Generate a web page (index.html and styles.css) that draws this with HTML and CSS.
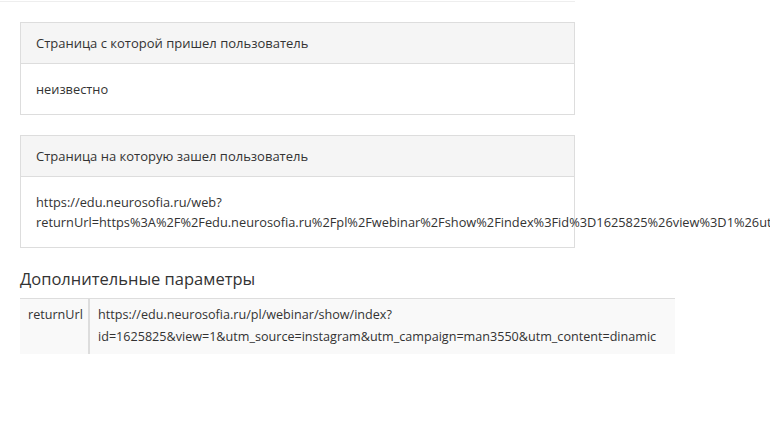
FILE: index.html
```html
<!DOCTYPE html>
<html lang="ru">
<head>
<meta charset="utf-8">
<link rel="stylesheet" href="styles.css">
</head>
<body>
<div class="topline"></div>
<main class="content">
  <section class="panel">
    <div class="panel-heading">Страница с которой пришел пользователь</div>
    <div class="panel-body">неизвестно</div>
  </section>
  <section class="panel">
    <div class="panel-heading">Страница на которую зашел пользователь</div>
    <div class="panel-body">https://edu.neurosofia.ru/web?<br>returnUrl=https%3A%2F%2Fedu.neurosofia.ru%2Fpl%2Fwebinar%2Fshow%2Findex%3Fid%3D1625825%26view%3D1%26utm_source%3Dinstagram%26utm_campaign%3Dman3550%26utm_content%3Ddinamic</div>
  </section>
  <h3 class="section-title">Дополнительные параметры</h3>
  <table class="params">
    <tr>
      <td class="param-name">returnUrl</td>
      <td class="param-value">https://edu.neurosofia.ru/pl/webinar/show/index?<br>id=1625825&amp;view=1&amp;utm_source=instagram&amp;utm_campaign=man3550&amp;utm_content=dinamic</td>
    </tr>
  </table>
</main>
</body>
</html>
```
FILE: styles.css
```css
html, body {
  margin: 0;
  padding: 0;
  background: #fff;
  overflow: hidden;
}
body {
  font-family: "Open Sans", "Liberation Sans", sans-serif;
  font-size: 13px;
  color: #333;
  width: 770px;
  height: 442px;
}
.topline {
  width: 575px;
  height: 1px;
  margin-top: 1px;
  background: #eeeeee;
}
.content {
  width: 555px;
  padding: 0 20px;
}
.panel {
  margin-top: 20px;
  border: 1px solid #dddddd;
  background: #fff;
}
.panel-heading {
  background: #f5f5f5;
  border-bottom: 1px solid #dddddd;
  padding: 0 15px;
  height: 40px;
  line-height: 40px;
}
.panel-body {
  padding: 15px;
  line-height: 20px;
  white-space: nowrap;
  font-size: 12.8px;
}
.section-title {
  margin: 19px 0 0;
  font-size: 16.5px;
  font-weight: normal;
  line-height: 24px;
  height: 31px;
}
.params {
  border-collapse: collapse;
  width: 655px;
  border-top: 1px solid #dddddd;
  background: #f9f9f9;
  font-size: 12.6px;
  table-layout: fixed;
}
.params td {
  vertical-align: top;
  padding: 5px 8px 6px;
  line-height: 22px;
}
.param-name {
  width: 52px;
  padding-left: 9px;
  border-right: 2px solid #dddddd;
  white-space: nowrap;
}
.param-value {
  white-space: nowrap;
}
```
